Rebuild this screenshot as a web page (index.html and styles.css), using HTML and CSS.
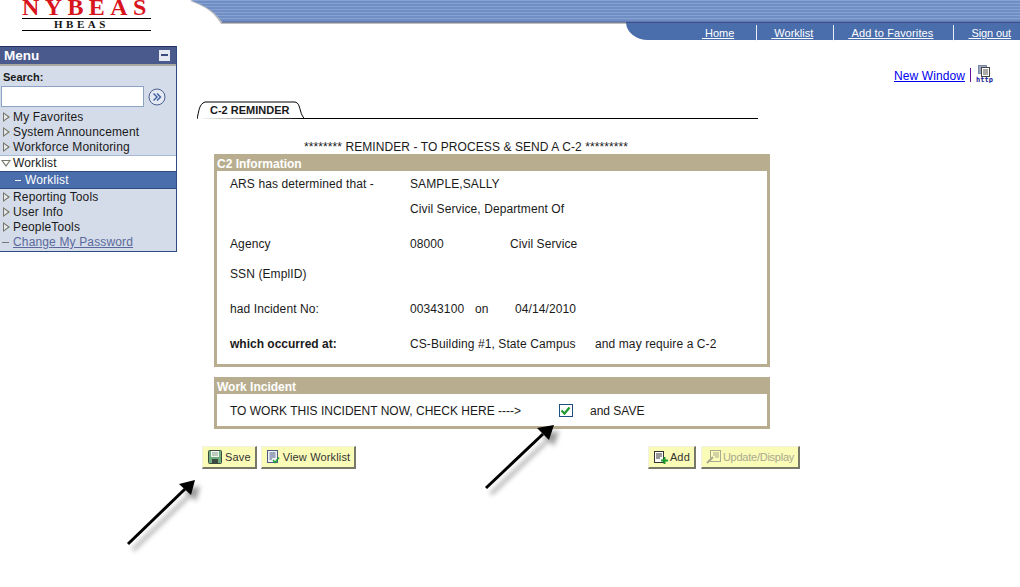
FILE: index.html
```html
<!DOCTYPE html>
<html lang="en">
<head>
    <meta charset="UTF-8">
    <meta name="viewport" content="width=device-width, initial-scale=1.0">
    <title>C-2 Reminder</title>
    <link rel="stylesheet" href="styles.css">
</head>
<body>
    <header class="header">
        <svg class="banner" width="830" height="26" viewBox="0 0 830 26">
            <defs>
                <pattern id="stripes" width="4" height="3" patternUnits="userSpaceOnUse">
                    <rect width="4" height="3" fill="#6f8fc4"/>
                    <rect width="4" height="1" fill="#88a3d2"/>
                </pattern>
            </defs>
            <path d="M0 1 C12 6 22 9 31 24 H830 V0 Z" fill="#bdbdbd"/>
            <path d="M0 0 C12 5 22 8 32 22 H830 V0 Z" fill="url(#stripes)"/>
            <path d="M32 22 H830" stroke="#3c4f8c"/>
        </svg>
        <div class="logo">
            <div class="logo-name">NYBEAS</div>
            <div class="logo-sub">HBEAS</div>
        </div>
        <nav class="topnav">
            <a href="#">&nbsp;Home</a>
            <a href="#">&nbsp;Worklist</a>
            <a href="#">&nbsp;Add to Favorites</a>
            <a href="#">&nbsp;Sign out</a>
        </nav>
    </header>

    <div class="page">
        <aside class="menu">
            <div class="menu-title">
                <span>Menu</span>
                <span class="collapse"></span>
            </div>
            <div class="search">
                <label for="search">Search:</label>
                <div class="search-row">
                    <input type="text" id="search">
                    <span class="go">
                        <svg width="18" height="18" viewBox="0 0 18 18">
                            <circle cx="9" cy="9" r="8" fill="#e4e9f2" stroke="#4a5f92"/>
                            <path d="M5.5 5.5 L9 9 L5.5 12.5 M9 5.5 L12.5 9 L9 12.5" fill="none" stroke="#3d5da0" stroke-width="1.4"/>
                        </svg>
                    </span>
                </div>
            </div>
            <ul class="menu-list">
                <li class="closed">My Favorites</li>
                <li class="closed">System Announcement</li>
                <li class="closed">Workforce Monitoring</li>
                <li class="open">Worklist</li>
                <li class="current">Worklist</li>
                <li class="closed">Reporting Tools</li>
                <li class="closed">User Info</li>
                <li class="closed">PeopleTools</li>
                <li class="leaf"><a href="#">Change My Password</a></li>
            </ul>
        </aside>

        <main class="content">
            <div class="newwin">
                <a href="#">New Window</a>
                <span class="newwin-sep"></span>
                <svg width="18" height="18" viewBox="0 0 18 18">
                    <rect x="2.5" y="0.5" width="8" height="8" fill="#9aa7c0" stroke="#7d8aa6"/>
                    <rect x="5.5" y="2.5" width="8" height="9" fill="#fff" stroke="#444"/>
                    <path d="M7 5 H12 M7 7 H12 M7 9 H12" stroke="#555"/>
                    <text x="0" y="17" class="http">http</text>
                </svg>
            </div>

            <div class="tabs">
                <svg class="tab-shape" width="107" height="18" viewBox="0 0 107 18">
                    <path d="M0 18 C2 10 2 3 8 1 H98 C104 2 102 12 107 17" fill="#fff" stroke="#000"/>
                </svg>
                <span class="tab-label">C-2 REMINDER</span>
            </div>

            <p class="notice">******** REMINDER - TO PROCESS &amp; SEND A C-2 *********</p>

            <section class="box">
                <h3>C2 Information</h3>
                <div class="info">
                    <div class="row"><span class="lbl">ARS has determined that -</span><span>SAMPLE,SALLY</span></div>
                    <div class="row"><span class="lbl"></span><span>Civil Service, Department Of</span></div>
                    <div class="row gap-l"><span class="lbl">Agency</span><span class="w100">08000</span><span>Civil Service</span></div>
                    <div class="row gap-m"><span class="lbl">SSN (EmplID)</span></div>
                    <div class="row gap-l"><span class="lbl">had Incident No:</span><span class="w65">00343100</span><span class="w40">on</span><span>04/14/2010</span></div>
                    <div class="row gap-l"><span class="lbl bold">which occurred at:</span><span class="w185">CS-Building #1, State Campus</span><span>and may require a C-2</span></div>
                </div>
            </section>

            <section class="box work">
                <h3>Work Incident</h3>
                <div class="work-row">
                    <span class="work-text">TO WORK THIS INCIDENT NOW, CHECK HERE ----&gt;</span>
                    <span class="check">
                        <svg width="11" height="11" viewBox="0 0 11 11"><path d="M1.5 5.5 L4.5 8.5 L9.5 2.5" fill="none" stroke="#1c9a2e" stroke-width="2.2"/></svg>
                    </span>
                    <span class="work-text-end">and SAVE</span>
                </div>
            </section>

            <div class="actions">
                <div class="btn-group">
                    <button class="btn" type="button">
                        <svg width="14" height="14" viewBox="0 0 14 14">
                            <rect x="0.5" y="0.5" width="13" height="13" rx="1" fill="#6fae7c" stroke="#3c4a40"/>
                            <rect x="3" y="1" width="8" height="6" fill="#eef5ee"/>
                            <path d="M4 3 H10 M4 5 H10" stroke="#8aa08e"/>
                            <rect x="4" y="9" width="6" height="4" fill="#3c4a40"/>
                        </svg>
                        Save
                    </button>
                    <button class="btn" type="button">
                        <svg width="13" height="14" viewBox="0 0 13 14">
                            <rect x="0.5" y="0.5" width="10" height="12" fill="#eef1f8" stroke="#4a5a80"/>
                            <path d="M2.5 3 H8.5 M2.5 5 H8.5 M2.5 7 H8.5 M2.5 9 H5" stroke="#4a5a80"/>
                            <path d="M6 10 L8 12.5 L12 7.5" fill="none" stroke="#23a03a" stroke-width="1.5"/>
                        </svg>
                        View Worklist
                    </button>
                </div>
                <div class="btn-group">
                    <button class="btn btn-add" type="button">
                        <svg width="14" height="13" viewBox="0 0 14 13">
                            <rect x="0.5" y="0.5" width="9" height="11" fill="#fff" stroke="#333"/>
                            <path d="M2 3 H8 M2 5 H8 M2 7 H6" stroke="#333"/>
                            <path d="M7 9.5 H14 M10.5 6 V13" stroke="#1c9a2e" stroke-width="2"/>
                        </svg>
                        Add
                    </button>
                    <button class="btn disabled" type="button" disabled>
                        <svg width="15" height="14" viewBox="0 0 15 14">
                            <rect x="4.5" y="0.5" width="10" height="11" fill="none" stroke="#a9a98f"/>
                            <path d="M7 3 H13 M7 5 H13 M9 7 H13" stroke="#a9a98f"/>
                            <path d="M1 13 L7 7" stroke="#a9a98f" stroke-width="2"/>
                        </svg>
                        Update/Display
                    </button>
                </div>
            </div>
        </main>
    </div>

    <!-- callout arrows drawn over the page -->
    <svg class="arrows" width="1020" height="587" viewBox="0 0 1020 587">
        <defs>
            <filter id="soft" x="-30%" y="-30%" width="170%" height="170%">
                <feDropShadow dx="5" dy="6" stdDeviation="2.5" flood-color="#000" flood-opacity="0.4"/>
            </filter>
        </defs>
        <g filter="url(#soft)">
            <path d="M128 544 L185 489" stroke="#000" stroke-width="3"/>
            <path d="M195 480 L191 495 L179 484 Z" fill="#000"/>
            <path d="M486 488 L543 434" stroke="#000" stroke-width="3"/>
            <path d="M554 425 L549 440 L537 428 Z" fill="#000"/>
        </g>
    </svg>
</body>
</html>
```

FILE: styles.css
```css
/* General styles */
* {
    box-sizing: border-box;
}

body {
    margin: 0;
    height: 587px;
    overflow: hidden;
    background: #fff;
    color: #1a1a1a;
    font-family: "Liberation Sans", Arial, sans-serif;
    font-size: 12px;
    position: relative;
}

/* Header */
.header {
    height: 40px;
    position: relative;
    display: flex;
    justify-content: space-between;
}

.banner {
    position: absolute;
    top: 0;
    right: 0;
}

.logo {
    width: 129px;
    margin-left: 22px;
    height: 31px;
    position: relative;
}

.logo-name {
    height: 19px;
    border-bottom: 1px solid #000;
    color: #d8141c;
    font-family: "Liberation Serif", serif;
    font-size: 24px;
    font-weight: bold;
    line-height: 15px;
    letter-spacing: 5.4px;
    white-space: nowrap;
}

.logo-sub {
    height: 12px;
    padding-left: 32px;
    border-bottom: 1px solid #000;
    color: #111;
    font-family: "Liberation Serif", serif;
    font-size: 11px;
    font-weight: bold;
    line-height: 11px;
    letter-spacing: 3.5px;
}

.topnav {
    align-self: flex-end;
    width: 394px;
    height: 18px;
    position: relative;
    display: flex;
    justify-content: flex-end;
    align-items: center;
    padding-top: 2px;
    background: #4a6dab;
    border-top: 1px solid #3c4f8c;
    border-bottom-left-radius: 22px 18px;
}

.topnav a {
    color: #fff;
    font-size: 11px;
    height: 16px;
    line-height: 16px;
    text-decoration: underline;
    position: relative;
    margin-left: 15px;
    margin-right: 20px;
}

.topnav a + a::before {
    content: "";
    position: absolute;
    left: -15px;
    top: 0;
    bottom: 0;
    width: 1px;
    background: #e8edf6;
}

.topnav a:first-child {
    margin-right: 22px;
}

.topnav a:nth-child(3) {
    letter-spacing: 0.12px;
}

.topnav a:last-child {
    margin-right: 9px;
    letter-spacing: -0.1px;
}

/* Page columns */
.page {
    display: grid;
    grid-template-columns: 177px 1fr;
    margin-top: 6px;
}

/* Left menu */
.menu {
    height: 206px;
    background: #d5dce9;
    border-right: 1px solid #2f4a80;
    border-bottom: 1px solid #2f4a80;
}

.menu-title {
    height: 20px;
    display: flex;
    justify-content: space-between;
    align-items: center;
    padding: 0 6px 0 4px;
    background: #4a5a8c;
    border-top: 1px solid #1f2f60;
    border-bottom: 2px solid #a8a8a0;
    color: #fff;
    font-size: 13.5px;
    font-weight: bold;
}

.collapse {
    width: 11px;
    height: 11px;
    background: #e6e9f2;
    position: relative;
}

.collapse::after {
    content: "";
    position: absolute;
    left: 2px;
    right: 2px;
    top: 4px;
    height: 2px;
    background: #3d4d80;
}

.search label {
    display: block;
    padding: 5px 0 0 3px;
    height: 20px;
    font-size: 11px;
    font-weight: bold;
}

.search-row {
    display: flex;
    align-items: center;
    gap: 4px;
    padding-left: 1px;
    height: 21px;
}

.search-row input {
    width: 143px;
    height: 21px;
    border: 1px solid #8ba4c4;
    background: #fff;
}

.go {
    display: flex;
}

.menu-list {
    list-style: none;
    margin: 3px 0 0;
    padding: 0;
    letter-spacing: 0.15px;
}

.menu-list li {
    height: 15px;
    line-height: 15px;
    padding-left: 13px;
    position: relative;
    white-space: nowrap;
}

/* tree arrows: outer grey triangle with a lighter one on top */
.menu-list li::before,
.menu-list li::after {
    content: "";
    position: absolute;
}

.menu-list .closed::before {
    left: 3px;
    top: 2px;
    border-left: 7px solid #77776a;
    border-top: 5px solid transparent;
    border-bottom: 5px solid transparent;
}

.menu-list .closed::after {
    left: 4px;
    top: 4px;
    border-left: 4px solid #e6e8ee;
    border-top: 3px solid transparent;
    border-bottom: 3px solid transparent;
}

.menu-list .open {
    height: 16px;
    background: #fff;
    border-top: 1px solid #a9b8d4;
}

.menu-list .open::before {
    left: 1px;
    top: 4px;
    border-top: 7px solid #77776a;
    border-left: 5px solid transparent;
    border-right: 5px solid transparent;
}

.menu-list .open::after {
    left: 3px;
    top: 5px;
    border-top: 4px solid #fff;
    border-left: 3px solid transparent;
    border-right: 3px solid transparent;
}

.menu-list .current {
    height: 18px;
    margin-bottom: 1px;
    line-height: 16px;
    padding-left: 25px;
    color: #fff;
    background: #4a6dab;
    border-top: 1px solid #2f4a80;
    border-bottom: 1px solid #2f4a80;
}

.menu-list .current::before {
    left: 15px;
    top: 8px;
    width: 6px;
    height: 1px;
    background: #fff;
}

.menu-list .leaf::before {
    left: 2px;
    top: 7px;
    width: 7px;
    height: 1px;
    background: #777;
}

.menu-list .leaf a {
    color: #5a6a9c;
}

/* Main column */
.content {
    padding: 19px 0 0 20px;
    position: relative;
}

.newwin {
    height: 18px;
    display: flex;
    justify-content: flex-end;
    align-items: flex-start;
    padding-right: 26px;
}

.newwin a {
    color: #0000ee;
    margin-top: 4px;
    letter-spacing: 0.1px;
}

.newwin-sep {
    width: 1px;
    height: 14px;
    margin: 3px 5px 0 5px;
    background: #6a0f9a;
}

.http {
    font-family: "DejaVu Sans Mono", monospace;
    font-size: 7px;
    font-weight: bold;
    fill: #1a1a9c;
}

/* Tab strip */
.tabs {
    width: 561px;
    height: 18px;
    margin-top: 18px;
    position: relative;
    border-bottom: 1px solid #000;
}

.tab-shape {
    position: absolute;
    left: 0;
    top: 0;
}

.tab-label {
    position: relative;
    margin-left: 13px;
    font-size: 11px;
    font-weight: bold;
    line-height: 18px;
}

.notice {
    margin: 0 0 0 107px;
    padding-top: 21px;
    height: 35px;
    line-height: 15px;
    white-space: nowrap;
    letter-spacing: 0.08px;
}

/* Group boxes */
.box {
    width: 556px;
    margin-left: 17px;
    border: 3px solid #b8ae8f;
    border-top: none;
}

.box h3 {
    margin: 0 -3px;
    height: 17px;
    padding-left: 3px;
    background: #b8ae8f;
    color: #fff;
    font-size: 12px;
    font-weight: bold;
    line-height: 20px;
}

.info {
    height: 193px;
    padding: 3px 0 0 13px;
    letter-spacing: 0.1px;
}

.row {
    display: flex;
    height: 20px;
    line-height: 20px;
    margin-bottom: 5px;
}

/* sibling margins collapse, so these are the full gaps */
.gap-l {
    margin-top: 15px;
}

.gap-m {
    margin-top: 10px;
}

.lbl {
    width: 180px;
}

.bold {
    font-weight: bold;
    letter-spacing: 0;
}

.w100 {
    width: 100px;
}

.w65 {
    width: 65px;
}

.w40 {
    width: 40px;
}

.w185 {
    width: 185px;
}

.work {
    margin-top: 10px;
}

.work-row {
    height: 32px;
    padding-left: 13px;
    display: flex;
    align-items: center;
}

.work-text {
    width: 329px;
    white-space: nowrap;
    padding-top: 2px;
}

.work-text-end {
    padding-top: 2px;
}

.check {
    width: 14px;
    height: 13px;
    margin-right: 17px;
    border: 1px solid #1f4f80;
    display: flex;
}

/* Buttons */
.actions {
    width: 598px;
    margin: 17px 0 0 5px;
    display: flex;
    justify-content: space-between;
}

.btn-group {
    display: flex;
    gap: 4px;
}

.btn {
    height: 23px;
    display: flex;
    align-items: center;
    gap: 3px;
    padding: 0 4px 0 5px;
    background: #fbfbb8;
    border-style: solid;
    border-width: 1px 2px 2px 1px;
    border-color: #f2f2e4 #77776a #77776a #f2f2e4;
    color: #333;
    font-family: "Liberation Sans", Arial, sans-serif;
    font-size: 11px;
    letter-spacing: 0.15px;
}

.btn-add {
    gap: 2px;
}

.btn.disabled {
    margin-left: 1px;
    padding-left: 4px;
    gap: 2px;
    color: #a9a98f;
    letter-spacing: -0.25px;
}

/* Callouts */
.arrows {
    position: absolute;
    left: 0;
    top: 0;
    pointer-events: none;
}
```
